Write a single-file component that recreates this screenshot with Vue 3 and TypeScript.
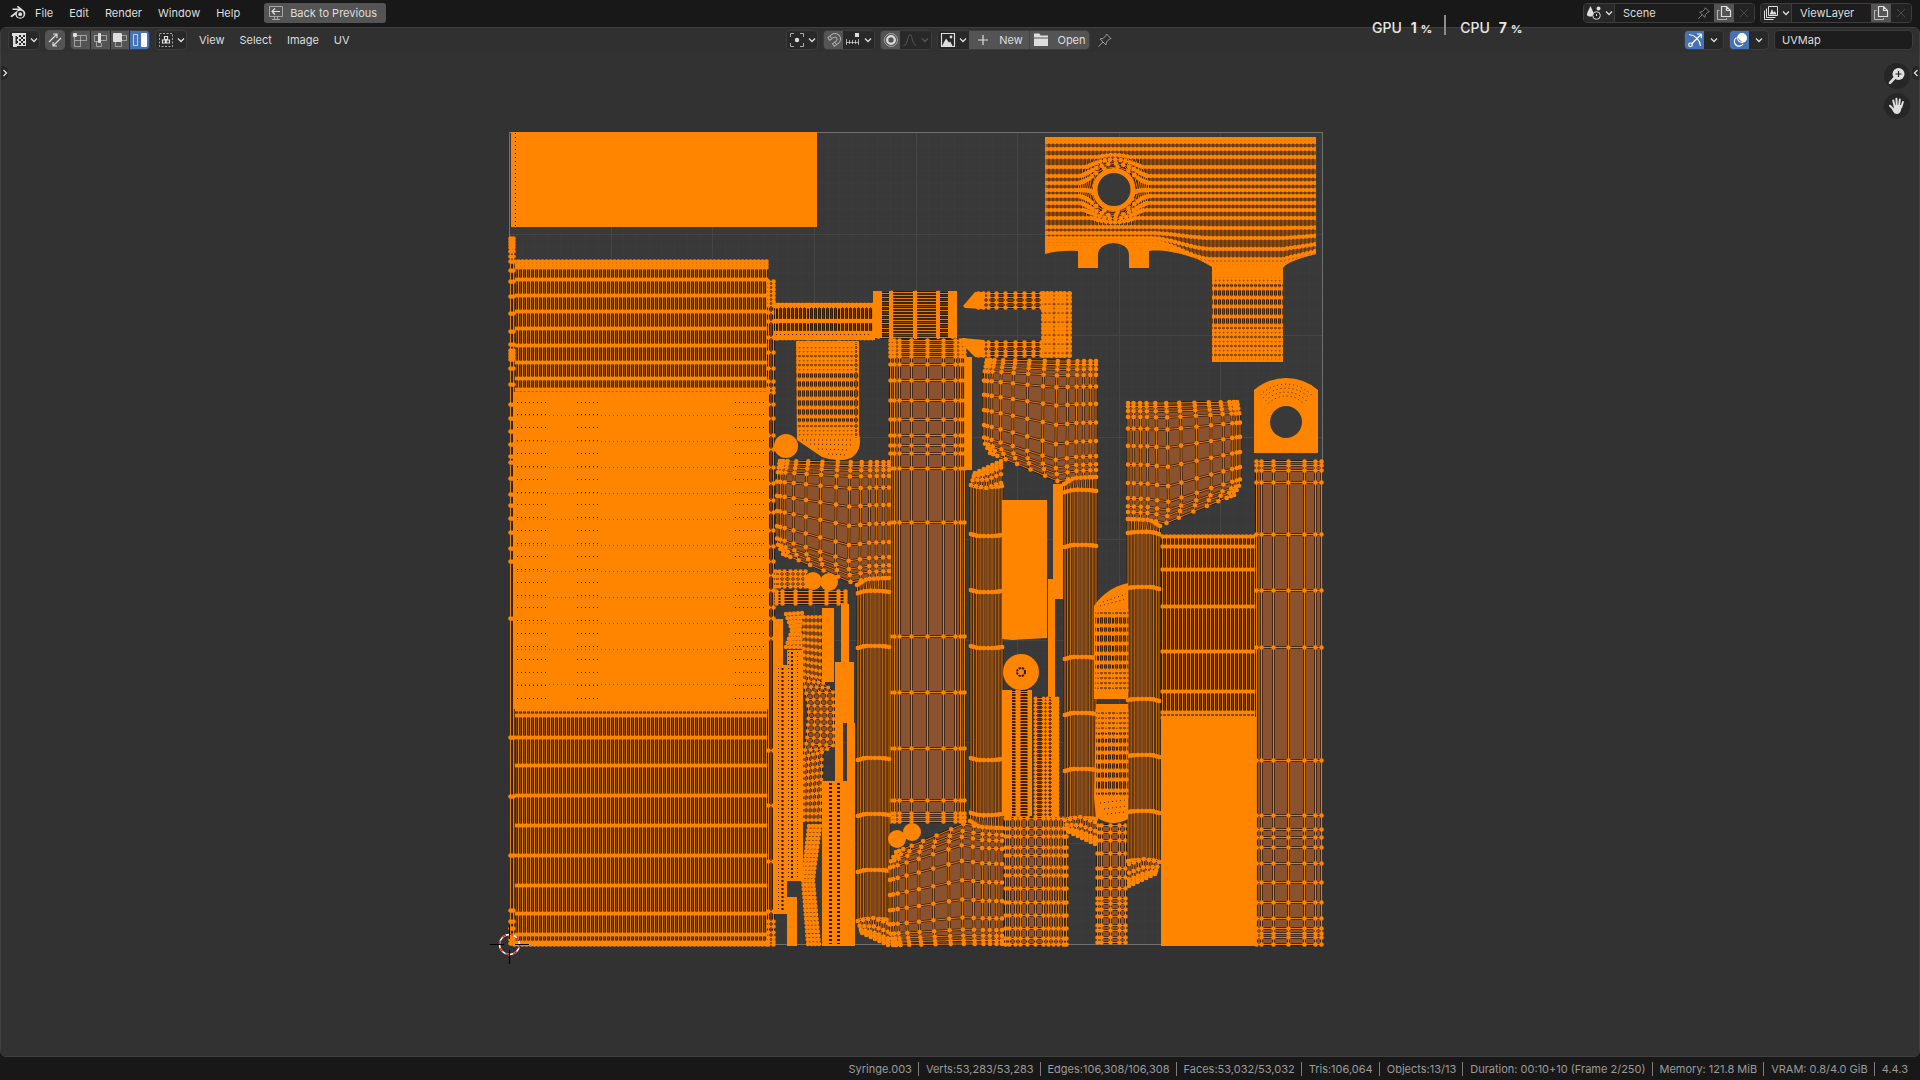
<script setup lang="ts">
import { ref } from 'vue'

type Pt = [number, number]
interface Mesh { face: string; edges: string; dots: string; size: number; tone: string }
interface Disc { x: number; y: number; r: number }

const menus = ['File', 'Edit', 'Render', 'Window', 'Help']
const editorMenus = ['View', 'Select', 'Image', 'UV']
const selectModes = [
  { id: 'vertex', label: 'Vertex select' },
  { id: 'edge', label: 'Edge select' },
  { id: 'face', label: 'Face select' },
  { id: 'island', label: 'Island select' },
]
const mode = ref('island')
const scene = ref('Scene')
const viewLayer = ref('ViewLayer')
const uvMap = ref('UVMap')

const stats = [
  'Syringe.003', 'Verts:53,283/53,283', 'Edges:106,308/106,308', 'Faces:53,032/53,032', 'Tris:106,064',
  'Objects:13/13', 'Duration: 00:10+10 (Frame 2/250)', 'Memory: 121.8 MiB', 'VRAM: 0.8/4.0 GiB', '4.4.3',
]

const BROWN = '#8b5230'
const MID = '#7c4826'
const DARK = '#6b3c12'

function span(from: number, to: number, count: number): number[] {
  return Array.from({ length: count + 1 }, (_, i) => from + ((to - from) * i) / count)
}

function at(line: Pt[], t: number): Pt {
  const lens = line.slice(1).map((p, i) => Math.hypot(p[0] - line[i][0], p[1] - line[i][1]))
  let rest = t * lens.reduce((a, b) => a + b, 0)
  for (let i = 0; i < lens.length; i++) {
    if (rest <= lens[i] || i === lens.length - 1) {
      const k = lens[i] ? rest / lens[i] : 0
      return [line[i][0] + (line[i + 1][0] - line[i][0]) * k, line[i][1] + (line[i + 1][1] - line[i][1]) * k]
    }
    rest -= lens[i]
  }
  return line[0]
}

const fmt = (p: Pt) => `${p[0].toFixed(1)} ${p[1].toFixed(1)}`
const poly = (pts: Pt[]) => 'M' + pts.map(fmt).join('L')

function weave(rows: Pt[][], size: number, tone: string): Mesh {
  const cols = rows[0].map((_, i) => rows.map((r) => r[i]))
  const last = rows[rows.length - 1]
  const rim = [...rows[0], ...cols[cols.length - 1], ...[...last].reverse(), ...[...cols[0]].reverse()]
  return {
    face: poly(rim) + 'Z',
    edges: [...rows, ...cols].map(poly).join(''),
    dots: rows.flat().map((p) => `M${fmt(p)}h0`).join(''),
    size,
    tone,
  }
}

const snap = (n: number) => Math.floor(n) + 0.5

function grid(xs: number[], ys: number[], size = 4.6, tone = BROWN): Mesh {
  return weave(ys.map((y) => xs.map((x): Pt => [snap(x), snap(y)])), size, tone)
}

// Patch stretched between four boundary curves
function patch(top: Pt[], right: Pt[], bottom: Pt[], left: Pt[], us: number[], vs: number[], size = 4.6, tone = BROWN): Mesh {
  const a = top[0], b = top[top.length - 1], c = bottom[0], d = bottom[bottom.length - 1]
  const rows = vs.map((v) => us.map((u): Pt => {
    const t = at(top, u), s = at(bottom, u), l = at(left, v), r = at(right, v)
    const mix = (i: 0 | 1) => (1 - v) * t[i] + v * s[i] + (1 - u) * l[i] + u * r[i]
      - ((1 - u) * (1 - v) * a[i] + u * (1 - v) * b[i] + (1 - u) * v * c[i] + u * v * d[i])
    return [mix(0), mix(1)]
  }))
  return weave(rows, size, tone)
}

function box(x1: number, y1: number, x2: number, y2: number): string {
  return `M${x1} ${y1}H${x2}V${y2}H${x1}Z`
}

const gridLines = Array.from({ length: 7 }, (_, i) => Math.round(((i + 1) * 813) / 8))
const fineLines = Array.from({ length: 63 }, (_, i) => Math.round(((i + 1) * 813) / 64))

const meshes: Mesh[] = [
  // barrel
  grid(span(514, 766, 63), [261, 264, 267, 279, 295, 311, 328, 345, 362, 378, 389, 393], 4.6, MID),
  grid(span(514, 766, 63), [709, 715, 737, 765, 795, 825, 855, 885, 913, 934, 942, 944], 4.6, MID),
  grid([510, 513], [238, 241, 244, 247, 251, 256, 261, 270, 281, 296, 313, 331, 344, 350, 353, 356, 359, 368, 384, 404,
    418, 431, 444, 456, 462, 478, 494, 505, 518, 532, 548, 561, 618, 737, 796, 855, 910, 921, 928, 935, 939, 943], 4.6, DARK),
  grid([768, 773], [281, 285, 289, 293, 297, 301, 305, 312, 321, 337, 352, 368, 381, 388, 392, 404, 418, 435, 449, 467, 483,
    500, 512, 530, 546, 561, 575, 590, 607, 618, 638, 750, 805, 861, 911, 921, 926, 932, 937, 941, 944], 4.6, DARK),
  // plunger neck
  grid(span(775, 872, 25), [304, 306, 320, 321, 332, 334, 338], 4, '#5a3210'),
  grid([878, 890], span(293, 337, 10), 3, '#5a3210'),
  grid([891, 915, 938], span(292, 337, 14), 4, '#7a4408'),
  grid([938, 952], span(293, 337, 10), 3, '#5a3210'),
  grid([890, 894, 899, 911, 927, 943, 955, 960, 964], [340, 344, 348, 352, 356, 364, 380, 400, 419, 435, 445, 453, 468, 522, 636, 692, 748, 800, 813, 817, 821]),
  // bracket
  grid([978, 983, 988, 996, 1005, 1015, 1024, 1033, 1041], [293, 297, 302, 307], 4.6, DARK),
  grid([978, 983, 988, 996, 1005, 1015, 1024, 1033, 1041], [342, 346, 351, 355], 4.6, DARK),
  grid(span(1043, 1069, 6), span(293, 355, 14), 5, DARK),
  // small rows beside the barrel
  grid([775, 779, 784, 790, 795, 800, 805], [571, 576, 581, 586]),
  grid([776, 782, 795, 810, 826, 838, 845], [591, 594, 597, 600, 603], 4.6, DARK),
  patch([[786, 614], [802, 613]], [[802, 613], [800, 630], [802, 647]], [[786, 647], [802, 647]], [[786, 614], [792, 630], [786, 647]],
    span(0, 1, 4), span(0, 1, 8), 4.4, DARK),
  patch([[804, 617], [820, 617]], [[820, 617], [820, 680], [833, 692], [834, 745], [822, 752], [820, 820]],
    [[804, 820], [820, 820]], [[804, 617], [804, 680], [809, 710], [807, 740], [804, 755], [804, 820]], span(0, 1, 4), span(0, 1, 32), 4),
  patch([[809, 826], [820, 826]], [[820, 826], [813, 880], [819, 944]], [[808, 944], [819, 944]], [[809, 826], [803, 880], [808, 944]],
    span(0, 1, 3), span(0, 1, 28), 4.4, DARK),
  // ribbed tubes under the disc
  grid([1005, 1008, 1016, 1019, 1028], span(691, 816, 42), 3, DARK),
  grid([1035, 1043, 1047, 1052, 1057], span(698, 816, 30), 4, DARK),
  grid([1005, 1009, 1015, 1020, 1027, 1035, 1043, 1048, 1053, 1058, 1063, 1066], [818, 828, 836, 847, 855, 867, 875, 888, 902, 915, 928, 938, 944]),
  grid([1097, 1101, 1110, 1119, 1125], [825, 832, 840, 853, 868, 877, 888, 898, 903, 909, 916, 925, 930, 937, 942]),
  // side sleeve
  grid(span(1162, 1254, 23), [536, 546, 569, 606, 651, 691, 712, 717], 4.6, DARK),
  grid([1256, 1261, 1273, 1288, 1304, 1315, 1321], [461, 465, 470, 482, 534, 590, 647, 760, 815, 829, 837, 847, 863, 882, 902, 918, 928, 933, 937, 944]),
]

const flapCols = [0, 0.03, 0.07, 0.15, 0.26, 0.39, 0.53, 0.65, 0.75, 0.83, 0.89, 0.95, 1]
const legCols = [0, 0.09, 0.19, 0.3, 0.42, 0.55, 0.68, 0.8, 0.9, 1]
const legRow = (y: number): Pt[] => [[1065, y + 1], [1072, y - 1], [1088, y - 1], [1096, y]]
const flap: Mesh[] = [
  patch([[987, 360], [1050, 361], [1096, 361]], [[1096, 361], [1096, 477]], [[990, 453], [1020, 465], [1060, 482], [1072, 478], [1096, 477]],
    [[987, 360], [984, 375], [984, 442], [990, 453]], flapCols, [0, 0.03, 0.07, 0.12, 0.22, 0.37, 0.53, 0.69, 0.82, 0.89, 0.94, 1]),
  patch([[1064, 484], [1074, 478], [1096, 477]], [[1096, 477], [1096, 491]], [[1065, 493], [1078, 489], [1096, 490]], [[1064, 484], [1065, 493]],
    legCols, [0, 1]),
  ...[[491, 546], [546, 658], [658, 714], [714, 770], [770, 819]].map(([a, b]) =>
    patch(legRow(a), [[1096, a], [1096, b]], legRow(b), [[1065, a + 1], [1065, b + 1]], legCols, [0, 1])),
  patch([[1065, 820], [1080, 817], [1095, 822]], [[1095, 822], [1095, 844]], [[1069, 832], [1095, 844]], [[1065, 820], [1069, 832]],
    span(0, 1, 6), [0, 0.4, 0.7, 0.85, 1]),
]

// The same flap is laid out four times: as is, moved, mirrored and flipped
const flapPlaces = ['', 'translate(-207 101)', 'matrix(-1 0 0 1 2224 42)', 'matrix(1 0 0 -1 -94 1305)']

const solids = [
  box(511, 132, 817, 227), box(513, 392, 769, 709), box(965, 357, 972, 470), box(773, 619, 783, 667), box(787, 897, 797, 946),
  box(822, 608, 834, 682), box(841, 604, 849, 662), box(835, 662, 854, 723), box(835, 723, 843, 781), box(847, 723, 855, 781),
  box(1053, 484, 1063, 599), box(1048, 579, 1055, 697), box(1161, 717, 1256, 946), 'M1002 500H1047V638L1012 640L1002 639Z',
  'M963 306L975 292H984V309L965 308Z', 'M962 338L984 340V357H975L967 349L962 342Z',
  box(1002, 690, 1012, 816), box(1016, 690, 1020, 816), box(1028, 690, 1032, 816), box(1053, 697, 1059, 816),
  box(822, 781, 855, 946), box(773, 665, 787, 914), box(787, 650, 803, 881),
  box(873, 291, 882, 338), box(948, 291, 957, 338), box(889, 291, 893, 338), box(913, 291, 917, 338), box(936, 291, 940, 338),
  box(774, 303, 875, 307), box(774, 319, 875, 323), box(774, 331, 875, 340),
]

const discs: Disc[] = [
  { x: 786, y: 446, r: 12 }, { x: 813, y: 581, r: 9 }, { x: 829, y: 582, r: 9 },
  { x: 897, y: 839, r: 9 }, { x: 912, y: 832, r: 9 }, { x: 1021, y: 672, r: 18 },
]

const pinRows = span(402, 698, 23).map((y) => {
  const r = snap(y)
  return `M517 ${r}H548M577 ${r}H598M735 ${r}H764`
}).join('')
const pinRowsLong = [415, 441, 467, 493, 519, 545, 571, 597, 623, 649, 684].map((y) => `M517 ${y + 0.5}H764`).join('')

const cape = 'M1045 137H1316V254C1300 258 1287 262 1283 268V362H1212V267C1195 255 1165 249 1149 251V268H1129V255C1129 239 1098 239 1098 255V268H1078V251Q1060 250 1045 254Z'
// Each row: height on the left and how far it sags above the sleeve
const capeRows: Pt[] = [
  [139, 0], [142, 0], [149, 0], [157, 0], [167, 0], [176, 0], [183, 0], [190, 0], [196, 0], [203, 0], [210, 0], [218, 0],
  [227, 1], [233, 5], [238, 11], [241, 18], [244, 19],
]
const capeBody = weave(capeRows.map(([y, sag]) => span(1047, 1315, 67).map((x): Pt => {
  const k = Math.min(1, Math.max(0, (x - 1150) / 62))
  const ease = k * k * (3 - 2 * k) * (x > 1283 ? 1 - (x - 1283) / 75 : 1)
  const yy = y + sag * ease
  const dx = x - 1114, dy = yy - 189.5
  const r = Math.hypot(dx, dy)
  if (r >= 36 || r < 1) return [x, yy]
  const pushed = 20 + (r * 16) / 36
  return [1114 + (dx * pushed) / r, 189.5 + (dy * pushed) / r]
})), 4.6, MID)
const capeMeshes: Mesh[] = [
  capeBody,
  grid(span(1213, 1281, 17), [278, 282, 288, 297, 306, 316, 325, 330, 334, 339, 343, 348, 352, 357, 360], 4.4, MID),
]
const cuff = 'M796 341H859V434Q863 450 851 458Q838 463 822 457L797 440Z'
const cuffMesh = grid(span(797, 858, 15), [343, 345, 349, 353, 358, 362, 367, 371, 379, 388, 398, 407, 416, 423, 428, 432, 436], 4.4, MID)
const capsuleTop = 'M1094 699V606Q1106 588 1128 583V699Z'
const capsuleBottom = 'M1096 704H1128V819Q1112 828 1096 817L1094 798Z'
const capsuleMeshes: Mesh[] = [
  grid(span(1096, 1126, 8), [610, 615, 625, 633, 643, 653, 662, 670, 675, 680, 685, 690], 4.4, MID),
  grid(span(1097, 1126, 8), [710, 715, 720, 725, 730, 736, 744, 752, 761, 770, 779, 790, 796], 4.4, MID),
]
const tag = 'M1254 390Q1268 378 1286 378Q1304 378 1318 390V453H1254Z'
const tagArcs = [24, 28, 32, 36].map((r) => {
  const dx = r * 0.72, dy = r * 0.69
  return `M${(1286 - dx).toFixed(1)} ${(420 - dy).toFixed(1)}A${r} ${r} 0 0 1 ${(1286 + dx).toFixed(1)} ${(420 - dy).toFixed(1)}`
}).join('')
</script>

<template>
  <svg class="sprites" aria-hidden="true">
    <defs>
      <symbol id="i-blender" viewBox="0 0 18 16">
        <path d="M1.2 11.2L9 5H3.5V3.6H10L7.8 1.9L9 .8L15.4 5.9A5 5 0 1 1 6.3 9.4L3 12.2Z" fill="currentColor" />
        <circle cx="11.2" cy="9.2" r="3.4" fill="#181818" /><circle cx="11.2" cy="9.2" r="1.9" fill="currentColor" />
      </symbol>
      <symbol id="i-chev" viewBox="0 0 8 8"><path d="M1 2.5L4 5.5L7 2.5" fill="none" stroke="currentColor" stroke-width="1.3" /></symbol>
      <symbol id="i-screen" viewBox="0 0 16 16">
        <path d="M1.5 1.5H14.5V11.5H1.5ZM6.5 12V14.5M9.5 12V14.5M4 14.5H12" fill="none" stroke="currentColor" opacity=".6" />
        <path d="M4 6.5H12M7 3.5L4 6.5L7 9.5" fill="none" stroke="currentColor" stroke-width="1.2" />
      </symbol>
      <symbol id="i-uv" viewBox="0 0 16 16">
        <path d="M1 1H6V4H4.5V12H6V15H2V4H1ZM6 1H15V14H6Z" fill="currentColor" />
        <path d="M8 3h2v2h-2zM12 3h2v2h-2zM10 5h2v2h-2zM8 7h2v2h-2zM12 7h2v2h-2zM10 9h2v2h-2zM8 11h2v2h-2zM12 11h2v2h-2zM6 5h1v2h-1zM6 9h1v2h-1z" fill="#282828" />
      </symbol>
      <symbol id="i-sync" viewBox="0 0 16 16">
        <path d="M2 10L10 2M10 6V2H6M6 14L14 6M6 10V14H10" fill="none" stroke="currentColor" stroke-width="1.2" />
      </symbol>
      <symbol id="i-vertex" viewBox="0 0 16 16">
        <path d="M5 3.5H14.5V8.5H2.5V5M2.5 8.5V14.5H8.5V3.5" fill="none" stroke="currentColor" opacity=".55" />
        <rect x="1" y="1" width="4" height="4" rx="1" fill="currentColor" />
      </symbol>
      <symbol id="i-edge" viewBox="0 0 16 16">
        <path d="M6 3.5H2.5V9.5H6M9 3.5H14.5V8.5H9M4.5 9.5V14.5H9.5V11" fill="none" stroke="currentColor" opacity=".55" />
        <rect x="6" y="1" width="3" height="10" rx="1" fill="currentColor" />
      </symbol>
      <symbol id="i-face" viewBox="0 0 16 16">
        <path d="M10 3.5H14.5V8.5H10M3.5 10V14.5H9.5V10" fill="none" stroke="currentColor" opacity=".55" />
        <rect x="1" y="1" width="9" height="9" rx="1" fill="currentColor" />
      </symbol>
      <symbol id="i-island" viewBox="0 0 16 16">
        <path d="M1.5 2.5H5.5V13.5H1.5Z" fill="none" stroke="#bcd0f0" />
        <rect x="9" y="1" width="6" height="14" rx="1" fill="#fff" />
      </symbol>
      <symbol id="i-sticky" viewBox="0 0 16 16">
        <rect x="1.5" y="1.5" width="13" height="13" fill="none" stroke="currentColor" opacity=".7" stroke-dasharray="2 1.5" />
        <path d="M6.5 4.5H9.5V7.5H6.5ZM4.5 8H7.5V11H4.5ZM8.5 8H11.5V11H8.5Z" fill="none" stroke="currentColor" stroke-width="1.2" />
      </symbol>
      <symbol id="i-pivot" viewBox="0 0 16 16">
        <path d="M1.5 5V1.5H5M11 1.5H14.5V5M14.5 11V14.5H11M5 14.5H1.5V11" fill="none" stroke="currentColor" opacity=".7" />
        <circle cx="8" cy="8" r="2.2" fill="currentColor" />
      </symbol>
      <symbol id="i-magnet" viewBox="0 0 16 16">
        <path d="M1.5 6.5L5 3A5.5 5.5 0 0 1 12.8 10.8L9.3 14.3L7 12L10.4 8.5A2.2 2.2 0 0 0 7.3 5.4L3.8 8.8ZM3.5 4.8L5.8 7M9 10L11.2 12.3" fill="none" stroke="currentColor" opacity=".65" transform="rotate(8 8 8)" />
      </symbol>
      <symbol id="i-inc" viewBox="0 0 16 16">
        <path d="M1.5 7V13M4.5 8V12M7.5 8V12M10.5 8V12M13.5 7V13M1 10.5H14" fill="none" stroke="currentColor" opacity=".7" />
        <rect x="10" y="1" width="4" height="4" fill="currentColor" />
      </symbol>
      <symbol id="i-prop" viewBox="0 0 16 16">
        <circle cx="8" cy="8" r="6.5" fill="none" stroke="currentColor" opacity=".6" />
        <circle cx="8" cy="8" r="3.8" fill="none" stroke="currentColor" stroke-width="2.2" />
      </symbol>
      <symbol id="i-curve" viewBox="0 0 16 16"><path d="M1.5 13.5C6 13.5 5.5 2.5 8 2.5S10 13.5 14.5 13.5" fill="none" stroke="currentColor" /></symbol>
      <symbol id="i-image" viewBox="0 0 16 16">
        <path d="M1.5 1.5H14.5V14.5H1.5Z" fill="none" stroke="currentColor" stroke-width="1.2" />
        <path d="M2 14L6 6.5L9 10.5L10.3 9.5L12.5 14Z" fill="currentColor" /><circle cx="11" cy="5" r="1.4" fill="currentColor" />
      </symbol>
      <symbol id="i-plus" viewBox="0 0 16 16"><path d="M8 3V13M3 8H13" stroke="currentColor" stroke-width="1.2" /></symbol>
      <symbol id="i-folder" viewBox="0 0 16 16"><path d="M1 1.5H6.5L7.5 3.5H15V5.5H1ZM1 6.5H15V14H1Z" fill="currentColor" /></symbol>
      <symbol id="i-pin" viewBox="0 0 16 16">
        <path d="M9.5 2L14 6.5L12.5 7L9.5 10L9 13L3 7L6 6.5L9 3.5ZM6 10L1.5 14.5" fill="none" stroke="currentColor" />
      </symbol>
      <symbol id="i-scene" viewBox="0 0 16 16">
        <path d="M4.5 1C6 4 8 8 7.5 10C7 12 2 12 1 10C.8 8 3 4 4.5 1Z" fill="currentColor" />
        <circle cx="12.5" cy="3.5" r="2" fill="currentColor" />
        <circle cx="10.5" cy="10.5" r="3.8" fill="#222" stroke="currentColor" /><path d="M10.5 9V11" stroke="currentColor" />
      </symbol>
      <symbol id="i-layers" viewBox="0 0 16 16">
        <path d="M5.5 1.5H14.5V10.5H5.5ZM3.5 3.5V12.5H12.5M1.5 5.5V14.5H10.5" fill="none" stroke="currentColor" />
        <path d="M6.5 9.5L9 4L10.5 7.5L12 6L13.5 9.5Z" fill="currentColor" />
      </symbol>
      <symbol id="i-copy" viewBox="0 0 16 16">
        <path d="M5.5 1.5H10.5L14.5 5.5V11.5H5.5ZM10.5 1.5V5.5H14.5" fill="none" stroke="currentColor" stroke-width="1.2" />
        <path d="M3.5 5.5H1.5V14.5H10.5V13" fill="none" stroke="currentColor" opacity=".7" />
      </symbol>
      <symbol id="i-x" viewBox="0 0 16 16"><path d="M4 4L12 12M12 4L4 12" stroke="currentColor" /></symbol>
      <symbol id="i-gizmo" viewBox="0 0 16 16">
        <path d="M2 2.5C8 3 13 8 13.5 14M4.5 12L14 2.5M10 2H14.3V6.3" fill="none" stroke="currentColor" stroke-width="1.2" />
        <circle cx="3.5" cy="12.8" r="1.8" fill="none" stroke="currentColor" stroke-width="1.2" />
      </symbol>
      <symbol id="i-overlay" viewBox="0 0 16 16">
        <circle cx="10" cy="6" r="5" fill="currentColor" />
        <path d="M4.5 5.5A4.7 4.7 0 1 0 11 12" fill="none" stroke="currentColor" stroke-width="1.2" />
        <path d="M6.5 6.5A3.5 3.5 0 0 0 9.5 9.5" fill="none" stroke="#4772b3" />
      </symbol>
      <symbol id="i-zoom" viewBox="0 0 18 18">
        <circle cx="10.5" cy="7" r="6" fill="currentColor" /><path d="M6.5 11L2 15.8" stroke="currentColor" stroke-width="2.6" stroke-linecap="round" />
        <path d="M10.5 4V10M7.5 7H13.5" stroke="#242424" stroke-width="1.2" />
      </symbol>
      <symbol id="i-hand" viewBox="0 0 18 18">
        <path d="M5.2 3.5L6.6 9M8.4 1.8L8.8 8.5M11.8 2.4L11.2 8.5M14.9 5L13.4 10M2 8.8L5.8 12.5" stroke="currentColor" stroke-width="2" stroke-linecap="round" />
        <path d="M5.6 8H14.2L13 13.2Q11.8 17 9 17Q6.4 17 5 14.4L3.8 11.5L6 11Z" fill="currentColor" />
      </symbol>
    </defs>
  </svg>

  <div class="app">
    <nav class="topbar" aria-label="Application">
      <svg class="logo"><use href="#i-blender" /></svg>
      <button v-for="m in menus" :key="m" class="menu" type="button">{{ m }}</button>
      <button class="back" type="button"><svg class="ic"><use href="#i-screen" /></svg>Back to Previous</button>
      <div class="pickers">
        <div class="combo top scene">
          <button class="cell pick" type="button" aria-label="Browse scene"><svg class="ic"><use href="#i-scene" /></svg><svg class="chev"><use href="#i-chev" /></svg></button>
          <input v-model="scene" class="name" aria-label="Scene name">
          <button class="cell dim" type="button" aria-label="Pin scene"><svg class="ic small"><use href="#i-pin" /></svg></button>
          <button class="cell grey" type="button" aria-label="New scene"><svg class="ic"><use href="#i-copy" /></svg></button>
          <button class="cell off" type="button" aria-label="Delete scene"><svg class="ic"><use href="#i-x" /></svg></button>
        </div>
        <div class="combo top layer">
          <button class="cell pick" type="button" aria-label="Browse view layer"><svg class="ic"><use href="#i-layers" /></svg><svg class="chev"><use href="#i-chev" /></svg></button>
          <input v-model="viewLayer" class="name" aria-label="View layer name">
          <button class="cell grey" type="button" aria-label="New view layer"><svg class="ic"><use href="#i-copy" /></svg></button>
          <button class="cell off" type="button" aria-label="Delete view layer"><svg class="ic"><use href="#i-x" /></svg></button>
        </div>
      </div>
    </nav>

    <div class="usage">
      <span>GPU</span><b>1<small>%</small></b><i></i><span>CPU</span><b>7<small>%</small></b>
    </div>

    <main class="editor">
      <header class="tools">
        <div class="group">
          <button class="combo drop" type="button" aria-label="Editor type"><svg class="ic"><use href="#i-uv" /></svg><svg class="chev"><use href="#i-chev" /></svg></button>
          <button class="combo sync" type="button" aria-label="Sync selection"><svg class="ic"><use href="#i-sync" /></svg></button>
          <div class="combo modes">
            <button v-for="m in selectModes" :key="m.id" class="cell grey" :class="{ on: mode === m.id }" type="button" :aria-label="m.label" @click="mode = m.id">
              <svg class="ic"><use :href="'#i-' + m.id" /></svg>
            </button>
          </div>
          <button class="combo drop" type="button" aria-label="Sticky selection"><svg class="ic"><use href="#i-sticky" /></svg><svg class="chev"><use href="#i-chev" /></svg></button>
          <div class="menus"><button v-for="m in editorMenus" :key="m" class="menu" type="button">{{ m }}</button></div>
        </div>
        <div class="group middle">
          <button class="combo drop" type="button" aria-label="Pivot point"><svg class="ic"><use href="#i-pivot" /></svg><svg class="chev"><use href="#i-chev" /></svg></button>
          <div class="combo">
            <button class="cell grey" type="button" aria-label="Snap"><svg class="ic"><use href="#i-magnet" /></svg></button>
            <button class="cell pick" type="button" aria-label="Snapping"><svg class="ic"><use href="#i-inc" /></svg><svg class="chev"><use href="#i-chev" /></svg></button>
          </div>
          <div class="combo">
            <button class="cell grey" type="button" aria-label="Proportional editing"><svg class="ic"><use href="#i-prop" /></svg></button>
            <button class="cell pick faint" type="button" aria-label="Falloff"><svg class="ic"><use href="#i-curve" /></svg><svg class="chev"><use href="#i-chev" /></svg></button>
          </div>
          <div class="combo">
            <button class="cell pick" type="button" aria-label="Browse image"><svg class="ic"><use href="#i-image" /></svg><svg class="chev"><use href="#i-chev" /></svg></button>
            <button class="cell grey text wide" type="button"><svg class="ic"><use href="#i-plus" /></svg><span>New</span></button>
            <button class="cell grey text" type="button"><svg class="ic"><use href="#i-folder" /></svg><span>Open</span></button>
          </div>
          <button class="cell pin" type="button" aria-label="Pin image"><svg class="ic"><use href="#i-pin" /></svg></button>
        </div>
        <div class="group end">
          <div class="combo toggle">
            <button class="cell on" type="button" aria-label="Show gizmo"><svg class="ic"><use href="#i-gizmo" /></svg></button>
            <button class="cell" type="button" aria-label="Gizmo options"><svg class="chev"><use href="#i-chev" /></svg></button>
          </div>
          <div class="combo toggle">
            <button class="cell on" type="button" aria-label="Show overlays"><svg class="ic"><use href="#i-overlay" /></svg></button>
            <button class="cell" type="button" aria-label="Overlay options"><svg class="chev"><use href="#i-chev" /></svg></button>
          </div>
          <input v-model="uvMap" class="combo map" aria-label="Active UV map">
        </div>
      </header>

      <section class="canvas" aria-label="UV layout">
        <svg class="uv" viewBox="1 52 1918 1004" preserveAspectRatio="xMidYMid meet">
          <defs>
            <clipPath id="c-cape"><path :d="cape" /></clipPath>
            <clipPath id="c-cuff"><path :d="cuff" /></clipPath>
          </defs>
          <rect x="509" y="132" width="814" height="813" fill="#393939" />
          <g stroke="#fff" stroke-opacity=".012">
            <path v-for="g in fineLines" :key="g" :d="`M${509.5 + g} 132V945M509 ${132.5 + g}H1323`" />
          </g>
          <g stroke="#454545">
            <path v-for="g in gridLines" :key="g" :d="`M${509.5 + g} 132V945M509 ${132.5 + g}H1323`" />
          </g>
          <rect x="509.5" y="132.5" width="813" height="812" fill="none" stroke="#707070" />

          <g v-for="(m, i) in meshes" :key="i">
            <path :d="m.face" :fill="m.tone" />
            <path class="shade" :d="m.edges" /><path class="edge" :d="m.edges" />
            <path class="dot" :d="m.dots" :stroke-width="m.size" />
          </g>
          <g v-for="t in flapPlaces" :key="t" :transform="t || undefined">
            <g v-for="(m, i) in flap" :key="i">
              <path :d="m.face" :fill="m.tone" />
              <path class="shade" :d="m.edges" /><path class="edge" :d="m.edges" />
              <path class="dot" :d="m.dots" :stroke-width="m.size" />
            </g>
          </g>

          <path v-for="s in solids" :key="s" class="solid" :d="s" />
          <path class="pins" d="M515.5 133V226M778.5 668V912M788.5 652V880M797.5 652V880M776 334.5H872" />
          <path class="slots thin" d="M792 652V880M782.5 668V912" />
          <path class="slots" d="M830.5 783V944M838.5 783V944" />
          <path class="pins" :d="pinRows" /><path class="pins soft" :d="pinRowsLong" />
          <circle v-for="d in discs" :key="d.x" class="solid" :cx="d.x" :cy="d.y" :r="d.r" />
          <circle cx="1021" cy="672" r="4" fill="none" stroke="#2a1600" stroke-width="2" stroke-dasharray="2.2 1" />

          <path class="solid" :d="cape" />
          <g clip-path="url(#c-cape)">
            <g v-for="(m, i) in capeMeshes" :key="i">
              <path :d="m.face" :fill="m.tone" />
              <path class="shade" :d="m.edges" /><path class="edge" :d="m.edges" />
              <path class="dot" :d="m.dots" :stroke-width="m.size" />
            </g>
          </g>
          <circle cx="1114" cy="189.5" r="19" fill="#393939" stroke="#ff8500" stroke-width="5" />

          <path class="solid" :d="cuff" />
          <g clip-path="url(#c-cuff)">
            <path :d="cuffMesh.face" :fill="cuffMesh.tone" />
            <path class="shade" :d="cuffMesh.edges" /><path class="edge" :d="cuffMesh.edges" />
            <path class="dot" :d="cuffMesh.dots" :stroke-width="cuffMesh.size" />
          </g>
          <path class="pins" d="M802 440L852 440M810 444L852 445M818 449L850 450M828 454L848 455" />

          <path class="solid" :d="capsuleTop" /><path class="solid" :d="capsuleBottom" />
          <g v-for="(m, i) in capsuleMeshes" :key="'p' + i">
            <path :d="m.face" :fill="m.tone" />
            <path class="shade" :d="m.edges" /><path class="edge" :d="m.edges" />
            <path class="dot" :d="m.dots" :stroke-width="m.size" />
          </g>
          <path class="pins" d="M1103 602L1126 594M1100 606L1126 599M1100 803L1126 800M1104 809L1126 806M1107 814L1126 812" />

          <path class="solid" :d="tag" />
          <path class="pins" :d="tagArcs" />
          <circle cx="1286" cy="422" r="16" fill="#393939" />

          <g fill="none">
            <circle cx="509.5" cy="944.5" r="10" stroke="#fff" stroke-width="1.4" />
            <circle cx="509.5" cy="944.5" r="10" stroke="#e02020" stroke-width="1.4" stroke-dasharray="3.9 3.95" />
            <path d="M490 944.5H504M515 944.5H529M509.5 925V939M509.5 950V964" stroke="#000" />
          </g>
        </svg>
        <button class="tab left" type="button" aria-label="Show toolbar"><svg class="chev"><use href="#i-chev" /></svg></button>
        <button class="tab right" type="button" aria-label="Show sidebar"><svg class="chev"><use href="#i-chev" /></svg></button>
        <div class="nav">
          <button type="button" aria-label="Zoom"><svg><use href="#i-zoom" /></svg></button>
          <button type="button" aria-label="Pan"><svg><use href="#i-hand" /></svg></button>
        </div>
      </section>
    </main>

    <footer class="status"><span v-for="s in stats" :key="s">{{ s }}</span></footer>
  </div>
</template>

<style>
body { margin: 0; background: #181818; }
</style>

<style scoped>
.sprites { position: absolute; width: 0; height: 0; }
.app {
  position: relative; display: flex; flex-direction: column; height: 100vh; overflow: hidden;
  background: #181818; color: #dedede; font: 11px/16px Inter, "Liberation Sans", sans-serif;
}
button, input { font: inherit; color: inherit; border: 0; padding: 0; margin: 0; background: none; box-sizing: border-box; }
button { display: flex; align-items: center; justify-content: center; }
.ic { width: 16px; height: 16px; flex: none; }
.ic.small { width: 14px; height: 14px; }
.chev { width: 8px; height: 8px; flex: none; }

.topbar { display: flex; align-items: center; height: 27px; padding: 0 8px 1px 9px; box-sizing: border-box; flex: none; }
.logo { width: 18px; height: 16px; margin-right: 8px; }
.topbar .menu { margin-right: 16px; }
.back { height: 20px; margin-left: 8px; padding: 0 9px 0 4px; gap: 6px; border-radius: 3px; background: #545454; }
.pickers { display: flex; gap: 5px; margin-left: auto; }

.combo {
  display: flex; height: 20px; box-sizing: border-box; overflow: hidden; border: 1px solid #3d3d3d; border-radius: 4px; background: #282828;
}
.cell { height: 100%; width: 20px; flex: none; }
.cell.pick { width: 31px; gap: 3px; background: #282828; }
.cell.grey { background: #545454; }
.cell.on { background: #4772b3; color: #fff; }
.cell.dim { color: #8a8a8a; }
.cell.off { color: #484848; background: #222; }
.cell.faint { color: #555; }
.top { background: #1d1d1d; }
.top .pick { width: 30px; }
.top.scene { width: 172px; }
.top.layer { width: 152px; }
.name { flex: 1; width: 0; min-width: 0; height: 100%; padding: 0 8px; border-left: 1px solid #3d3d3d; }

.usage {
  position: absolute; z-index: 2; top: 15px; left: 1372px; display: flex; align-items: center; height: 26px;
  font-size: 14px; font-weight: 500; color: #e6e6e6;
}
.usage b { margin-left: 9px; font-weight: 700; }
.usage small { margin-left: 4px; font-size: 11px; font-weight: 800; }
.usage i { width: 2px; height: 20px; margin: 0 14px 6px 12px; background: #8c8c8c; }

.editor {
  position: relative; display: flex; flex-direction: column; flex: 1; min-height: 0; box-sizing: border-box; overflow: hidden;
  border: 1px solid #3f3f3f; border-radius: 6px; background: #303030;
}
.tools { display: grid; grid-template-columns: 1fr auto 1fr; align-items: center; height: 24px; flex: none; padding: 0 6px 0 7px; }
.group { display: flex; align-items: center; gap: 5px; }
.group.middle { margin-right: 20px; }
.group.middle .grey { width: 19px; }
.group.middle .grey.text { width: 60px; gap: 8px; }
.group.end { justify-self: end; }
.drop { width: 32px; gap: 3px; }
.sync { width: 20px; background: #545454; border-color: #545454; }
.modes { width: 80px; gap: 1px; }
.modes .cell { flex: 1; }
.menus { display: flex; gap: 15px; margin-left: 7px; }
.cell.text + .cell.text { border-left: 1px solid #424242; }
.pin { color: #9a9a9a; }
.toggle { width: 40px; }
.toggle .cell { flex: 1; }
.map { width: 139px; padding: 0 7px; background: #1d1d1d; }

.canvas { position: relative; flex: 1; min-height: 0; background: #323232; }
.uv { display: block; width: 100%; height: 100%; }
.shade { fill: none; stroke: #150b02; stroke-opacity: .72; stroke-width: 2.6; }
.edge { fill: none; stroke: #ff8500; stroke-opacity: .9; stroke-width: 1; }
.dot { fill: none; stroke: #ff8500; stroke-linecap: round; }
.solid { fill: #ff8500; }
.pins { fill: none; stroke: #3a1e00; stroke-width: 1; stroke-dasharray: 1 3; }
.pins.soft { stroke-opacity: .45; }
.slots { fill: none; stroke: #2c1804; stroke-width: 3; stroke-dasharray: 2 2; }
.slots.thin { stroke-width: 2; }

.tab { position: absolute; top: 14px; width: 7px; height: 14px; background: #262626; }
.tab.left { left: 0; border-radius: 0 5px 5px 0; }
.tab.right { right: 0; border-radius: 5px 0 0 5px; }
.tab.left .chev { transform: rotate(-90deg); }
.tab.right .chev { transform: rotate(90deg); }
.nav { position: absolute; top: 11px; right: 9px; display: flex; flex-direction: column; gap: 4px; }
.nav button { width: 26px; height: 26px; border-radius: 50%; background: #262626; }
.nav svg { width: 18px; height: 18px; }

.status { display: flex; align-items: center; justify-content: flex-end; height: 23px; flex: none; padding-right: 12px; color: #9b9b9b; white-space: nowrap; }
.status span + span { margin-left: 6px; padding-left: 7px; border-left: 1px solid #7d7d7d; line-height: 14px; }
</style>
